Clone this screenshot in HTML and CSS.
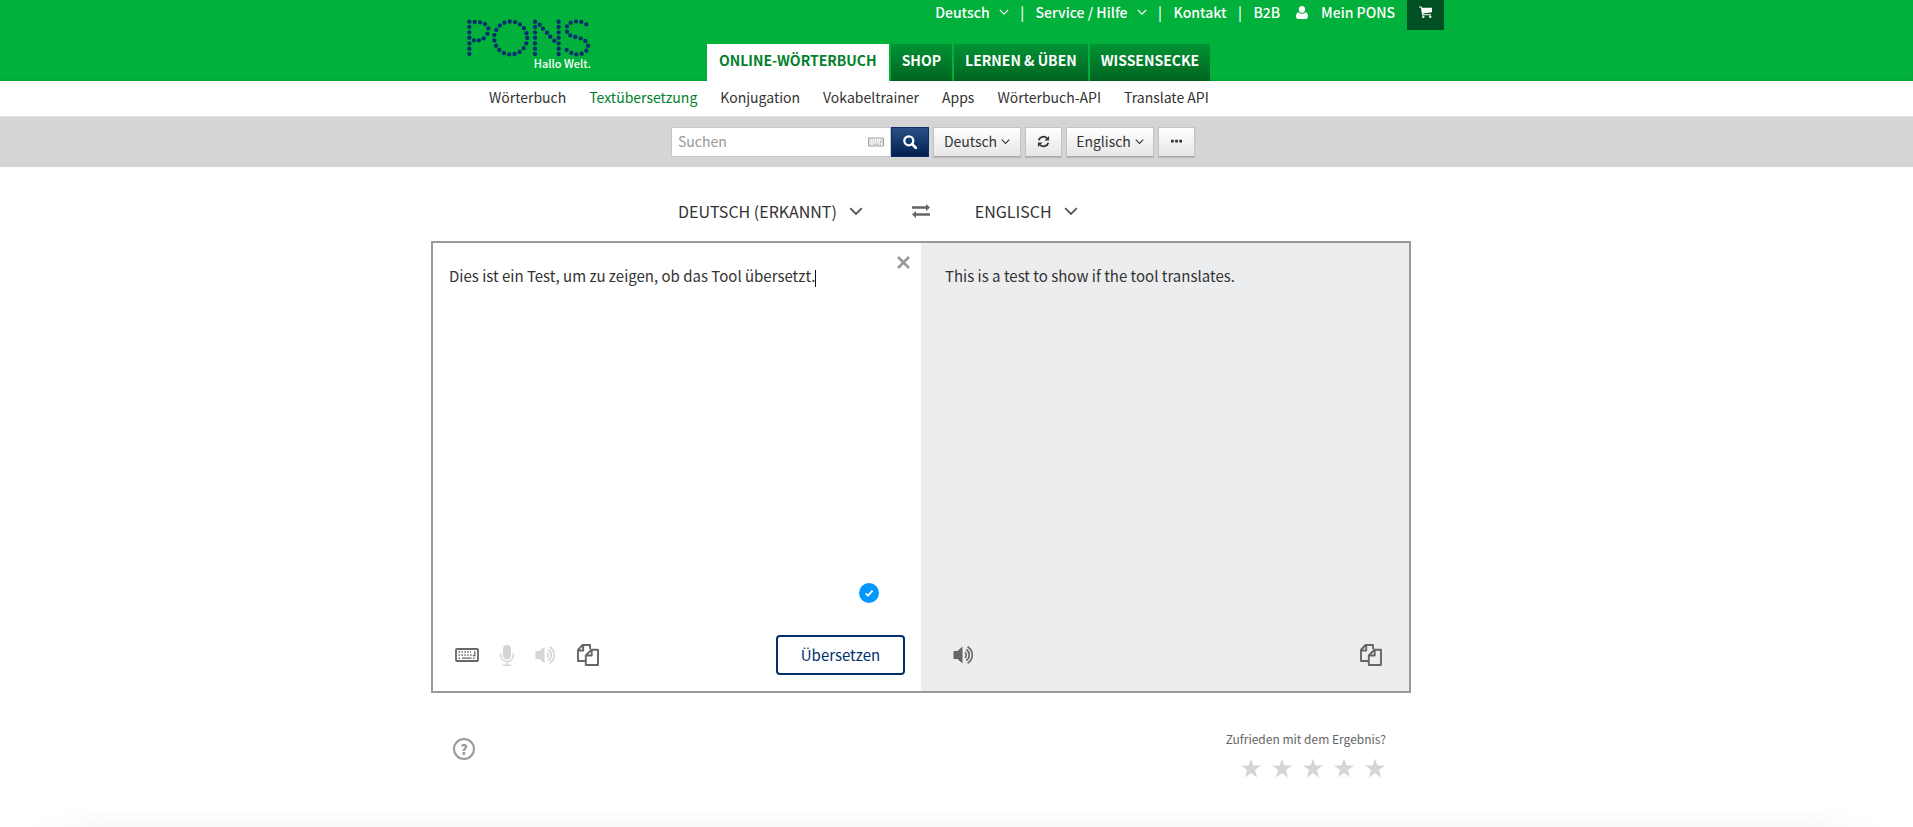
FILE: index.html
```html
<!DOCTYPE html>
<html lang="de">
<head>
<meta charset="utf-8">
<title>PONS Textübersetzung</title>
<link rel="stylesheet" href="styles.css">
</head>
<body>
<svg class="sprite" aria-hidden="true">
  <symbol id="chevron" viewBox="0 0 12 12"><path d="M1 3.500 6 8.500 11 3.500" fill="none" stroke="currentColor" stroke-width="1.500"/></symbol>
  <symbol id="keyboard" viewBox="0 0 24 14"><rect x="1" y="1" width="22" height="12" rx="1" fill="none" stroke="currentColor" stroke-width="1.800"/><path d="M3.500 4h12.500M3.500 7h13.500M3.500 10.200h2M18 10.200h2.500" stroke="currentColor" stroke-width="1.400" stroke-dasharray="1.500 1.400"/><path d="M7 10.200h9.500M19.800 3.300v4.400h-2" fill="none" stroke="currentColor" stroke-width="1.300"/></symbol>
  <symbol id="copy" viewBox="0 0 22 22"><path d="M13 5V1H5.500L1 5.800V17h7.500M1.200 6.500h5V1.200M8.800 11.500V21H21V5.800h-6.800L8.800 11.500h5.900V6" fill="none" stroke="currentColor" stroke-width="1.900" stroke-linejoin="round"/></symbol>
  <symbol id="speaker" viewBox="0 0 21 20"><path d="M.5 6H4.500l5-4.500v17L4.500 14H.5z" fill="currentColor"/><path d="M11.800 7.300a3.200 3.200 0 0 1 0 5.400M13.200 4.500a6.500 6.500 0 0 1 0 11M14.600 1.800a9.600 9.600 0 0 1 0 16.400" fill="none" stroke="currentColor" stroke-width="1.600"/></symbol>
  <symbol id="star" viewBox="0 0 20 20"><path d="m10 .4 2.400 7.100 7.600.1-6.100 4.500 2.200 7.300L10 15l-6.100 4.400 2.200-7.300L0 7.600l7.600-.1z" fill="currentColor"/></symbol>
</svg>

<header class="header">
  <div class="wrap header-inner">
    <a class="logo" href="#" aria-label="PONS">
      <svg class="logo-dots" viewBox="0 0 372 114" aria-hidden="true"><path d="M7 8h0M7 24h0M7 40h0M7 56h0M7 73h0M7 89h0M7 105h0M23 9h0M39 10h0M54 15h0M64 28h0M61 44h0M50 58h0M36 64h0M21 64h0M204 8h0M204 24h0M204 40h0M204 56h0M204 73h0M204 89h0M204 105h0M275 8h0M275 24h0M275 40h0M275 56h0M275 73h0M275 89h0M275 105h0M218 17h0M228 29h0M240 41h0M250 53h0M262 65h0M358 16h0M343 9h0M327 7h0M311 11h0M300 22h0M300 38h0M310 49h0M325 54h0M341 58h0M355 66h0M363 80h0M358 95h0M344 104h0M328 106h0M313 102h0M299 93h0"/><circle cx="131" cy="57" r="49.500" pathLength="190" stroke-dasharray="0 10"/></svg>
      <span class="claim">Hallo Welt.</span>
    </a>
    <div class="header-right">
      <nav class="meta">
        <a href="#">Deutsch <svg class="ico-chev"><use href="#chevron"/></svg></a><span class="sep">|</span>
        <a href="#">Service / Hilfe <svg class="ico-chev"><use href="#chevron"/></svg></a><span class="sep">|</span>
        <a href="#">Kontakt</a><span class="sep">|</span>
        <a href="#">B2B</a>
        <a class="account" href="#"><svg class="ico-user" viewBox="0 0 12 13"><path d="M6 0c2 0 3.200 1.500 3.200 3.300C9.200 5.300 7.900 7 6 7S2.800 5.300 2.800 3.300C2.800 1.500 4 0 6 0zM2.700 6.200C3.500 7.200 4.700 7.900 6 7.900s2.500-.7 3.300-1.700C11.300 6.500 12 8.500 12 10.500c0 1.500-.9 2.500-2.200 2.500H2.200C.9 13 0 12 0 10.500c0-2 .7-4 2.700-4.300z" fill="currentColor"/></svg>Mein PONS</a>
        <a class="cart" href="#" aria-label="Warenkorb"><svg class="ico-cart" viewBox="0 0 13 12"><path d="M0 .5h2.600l.4 1.300h10v4.500L4.100 7.400l.2.900H12v1H3.200L1.800 1.500H0z" fill="currentColor"/><circle cx="4.300" cy="10.700" r="1.200" fill="currentColor"/><circle cx="11.200" cy="10.700" r="1.200" fill="currentColor"/></svg></a>
      </nav>
      <nav class="tabs">
        <a class="tab active" href="#">ONLINE-WÖRTERBUCH</a>
        <a class="tab" href="#">SHOP</a>
        <a class="tab" href="#">LERNEN &amp; ÜBEN</a>
        <a class="tab" href="#">WISSENSECKE</a>
      </nav>
    </div>
  </div>
</header>

<nav class="subnav">
  <div class="wrap subnav-inner">
    <a href="#">Wörterbuch</a>
    <a class="current" href="#">Textübersetzung</a>
    <a href="#">Konjugation</a>
    <a href="#">Vokabeltrainer</a>
    <a href="#">Apps</a>
    <a href="#">Wörterbuch-API</a>
    <a href="#">Translate API</a>
  </div>
</nav>

<div class="searchbar">
  <form class="wrap search-inner">
    <div class="field">
      <input type="text" placeholder="Suchen" aria-label="Suchen">
      <svg class="ico-kb-small"><use href="#keyboard"/></svg>
    </div>
    <button class="go" type="button" aria-label="Suche starten"><svg class="ico-search" viewBox="0 0 14 14"><circle cx="5.800" cy="5.800" r="4.500" fill="none" stroke="currentColor" stroke-width="2.200"/><path d="m9 9 4 4" stroke="currentColor" stroke-width="2.600" stroke-linecap="round"/></svg></button>
    <button class="btn wide" type="button">Deutsch <svg class="ico-chev small"><use href="#chevron"/></svg></button>
    <button class="btn" type="button" aria-label="Sprachen tauschen"><svg class="ico-refresh" viewBox="0 0 14 14"><path d="M1.800 5.600A5.300 5.300 0 0 1 10.700 3.400M12.200 8.400A5.300 5.300 0 0 1 3.300 10.600" fill="none" stroke="currentColor" stroke-width="2"/><path d="M13 1v5H8zM1 13V8h5z" fill="currentColor"/></svg></button>
    <button class="btn wide" type="button">Englisch <svg class="ico-chev small"><use href="#chevron"/></svg></button>
    <button class="btn" type="button" aria-label="Mehr"><svg class="ico-more" viewBox="0 0 12 4"><path d="M0 .5h3v3H0zM4.500.5h3v3h-3zM9 .5h3v3H9z" fill="currentColor"/></svg></button>
  </form>
</div>

<main class="wrap">
  <div class="translator">
    <div class="languages">
      <button class="lang" type="button">DEUTSCH (ERKANNT) <svg class="ico-chev"><use href="#chevron"/></svg></button>
      <button class="lang swap" type="button" aria-label="Tauschen"><svg class="ico-swap" viewBox="0 0 18 14"><path d="M0 3.500h15M3 10.500h15" stroke="currentColor" stroke-width="2.600"/><path d="M14 0v7l4-3.500zM4 7v7L0 10.500z" fill="currentColor"/></svg></button>
      <button class="lang" type="button">ENGLISCH <svg class="ico-chev"><use href="#chevron"/></svg></button>
    </div>
    <div class="panes">
      <section class="pane">
        <button class="icon clear" type="button" aria-label="Löschen"><svg class="ico-x" viewBox="0 0 13 13"><path d="m1 1 11 11M12 1 1 12" stroke="currentColor" stroke-width="2.600"/></svg></button>
        <div class="source">
          <textarea rows="1" spellcheck="false" aria-label="Ausgangstext">Dies ist ein Test, um zu zeigen, ob das Tool übersetzt.</textarea><span class="caret"></span>
        </div>
        <div class="status"><svg class="ico-check" viewBox="0 0 20 20"><circle cx="10" cy="10" r="10" fill="#0097ff"/><path d="m6.700 10.300 2.400 2.400 4.400-5" fill="none" stroke="#fff" stroke-width="1.900"/></svg></div>
        <div class="tools">
          <button class="icon" type="button" aria-label="Tastatur"><svg class="ico-kb"><use href="#keyboard"/></svg></button>
          <button class="icon off" type="button" aria-label="Mikrofon"><svg class="ico-mic" viewBox="0 0 14 21"><rect x="3" y="0" width="8" height="14.500" rx="4" fill="currentColor"/><path d="M.7 8v2.500a6.300 6 0 0 0 12.600 0V8M7 16.500V20M2.500 20.200h9" fill="none" stroke="currentColor" stroke-width="1.400"/></svg></button>
          <button class="icon off" type="button" aria-label="Anhören"><svg class="ico-speaker"><use href="#speaker"/></svg></button>
          <button class="icon" type="button" aria-label="Kopieren"><svg class="ico-copy"><use href="#copy"/></svg></button>
          <button class="submit" type="button">Übersetzen</button>
        </div>
      </section>
      <section class="pane result">
        <p class="output">This is a test to show if the tool translates.</p>
        <div class="tools">
          <button class="icon" type="button" aria-label="Übersetzung anhören"><svg class="ico-speaker"><use href="#speaker"/></svg></button>
          <button class="icon last" type="button" aria-label="Übersetzung kopieren"><svg class="ico-copy"><use href="#copy"/></svg></button>
        </div>
      </section>
    </div>
    <div class="feedback">
      <button class="help" type="button" aria-label="Hilfe">?</button>
      <fieldset class="rating">
        <legend>Zufrieden mit dem Ergebnis?</legend>
        <div class="stars">
          <label><input type="radio" name="stars" aria-label="1 Stern"><svg class="ico-star"><use href="#star"/></svg></label>
          <label><input type="radio" name="stars" aria-label="2 Sterne"><svg class="ico-star"><use href="#star"/></svg></label>
          <label><input type="radio" name="stars" aria-label="3 Sterne"><svg class="ico-star"><use href="#star"/></svg></label>
          <label><input type="radio" name="stars" aria-label="4 Sterne"><svg class="ico-star"><use href="#star"/></svg></label>
          <label><input type="radio" name="stars" aria-label="5 Sterne"><svg class="ico-star"><use href="#star"/></svg></label>
        </div>
      </fieldset>
    </div>
  </div>
</main>
<div class="page-shade"></div>
</body>
</html>
```

FILE: styles.css
```css
* { box-sizing: border-box; }
body {
  margin: 0;
  min-height: 100vh;
  display: flex;
  flex-direction: column;
  background: #fff;
  color: #333;
  font: 15px/20px "Noto Sans CJK SC", "Noto Sans", sans-serif;
}
a { color: inherit; text-decoration: none; }
button, input, textarea { font: inherit; color: inherit; }
button { border: 0; padding: 0; background: none; cursor: pointer; }
svg { display: block; flex: none; }
.sprite { position: absolute; width: 0; height: 0; }
.wrap { width: 100%; max-width: 1051px; margin: 0 auto; }

.header { background: #02b03c; box-shadow: inset 0 -2px 2px -1px #029c35; }
.header-inner { display: flex; align-items: stretch; height: 81px; }
.logo { width: 124px; margin: 19px 0 0 36px; color: #fff; }
.logo-dots { width: 124px; height: 38px; }
.logo-dots path, .logo-dots circle { fill: none; stroke: #012f6d; stroke-width: 13; stroke-linecap: round; }
.claim { display: block; text-align: right; font-size: 11px; line-height: 12px; font-weight: 500; }
.header-right { flex: 1; display: flex; flex-direction: column; justify-content: space-between; margin: 0 38px 0 116px; }
.meta { display: flex; justify-content: flex-end; color: #fff; line-height: 24px; font-size: 14px; font-weight: 500; }
.meta a { display: flex; align-items: center; height: 24px; gap: 9px; }
.sep { width: 27px; text-align: center; }
.meta .account { margin: 0 12px 0 16px; gap: 13px; }
.meta .cart { width: 37px; height: 30px; padding-bottom: 6px; justify-content: center; background: #005023; }
.ico-chev { width: 10px; height: 10px; }
.ico-user { width: 12px; height: 13px; }
.ico-cart { width: 13px; height: 12px; }
.tabs { display: flex; gap: 2px; font-weight: 700; font-size: 14px; }
.tab { height: 37px; padding: 0 11px; line-height: 32px; color: #fff; background: linear-gradient(#029335, #006420); }
.tab.active { padding: 0 12px; background: #fff; color: #007f2c; }

.subnav { border-bottom: 1px solid #e6e6e6; }
.subnav-inner { display: flex; gap: 23px; height: 35px; padding-left: 58px; line-height: 32px; font-size: 14px; }
.current { color: #007f2c; }

.searchbar { background: #d5d5d5; }
.search-inner { display: flex; gap: 4px; padding: 10px 0 10px 240px; }
.field { display: flex; align-items: center; width: 220px; height: 30px; padding: 0 6px; margin-right: -4px; background: #fff; border: 1px solid #c8c8c8; }
.field input { flex: 1; min-width: 0; height: 28px; padding: 0 0 3px; border: 0; outline: 0; background: none; font-size: 14px; }
.field input::placeholder { color: #999; opacity: 1; }
.ico-kb-small { width: 16px; height: 10px; color: #999; }
.go { display: grid; place-items: center; width: 38px; height: 30px; color: #fff; background: linear-gradient(#2a5187, #01204f); border: 1px solid #0d2e63; }
.ico-search { width: 14px; height: 14px; }
.btn { display: flex; align-items: center; justify-content: center; gap: 4px; width: 37px; height: 30px; padding-bottom: 2px; font-size: 14px; background: linear-gradient(#fff, #e6e6e6); border: 1px solid #c4c4c4; border-bottom-color: #aaa; box-shadow: 0 1px 1px #bbb; }
.btn.wide { width: 88px; }
.ico-chev.small { width: 9px; height: 9px; }
.ico-refresh { width: 13px; height: 13px; }
.ico-more { width: 11px; height: 4px; }

.translator { max-width: 980px; }
.languages { display: flex; align-items: center; height: 74px; padding: 14px 0 0 247px; font-size: 16px; }
.lang { display: flex; align-items: center; gap: 12px; }
.lang .ico-chev { width: 14px; height: 14px; color: #555; }
.swap { color: #666; margin: 0 45px 0 49px; }
.ico-swap { width: 18px; height: 14px; }
.panes { display: grid; grid-template-columns: 1fr 1fr; border: 2px solid #999; }
.pane { position: relative; display: flex; flex-direction: column; height: 448px; padding: 22px 16px 16px; line-height: 22px; }
.result { background: #ecedef; padding-left: 24px; }
.clear { position: absolute; top: 13px; right: 11px; color: #999; }
.ico-x { width: 13px; height: 13px; }
.source { display: flex; flex: 1; align-items: flex-start; }
.source textarea { field-sizing: content; max-width: 420px; padding: 0; border: 0; outline: 0; resize: none; overflow: hidden; background: none; line-height: 22px; }
.caret { width: 1px; height: 17px; margin-top: 5px; background: #111; }
.output { flex: 1; margin: 0; }
.status { display: flex; justify-content: flex-end; padding: 0 26px 32px 0; }
.ico-check { width: 20px; height: 20px; }
.tools { display: flex; align-items: center; height: 40px; gap: 21px; padding-left: 6px; color: #666; }
.icon { display: block; }
.off { color: #d5d5d5; }
.ico-kb { width: 24px; height: 14px; }
.ico-mic { width: 14px; height: 21px; }
.ico-speaker { width: 21px; height: 20px; }
.ico-copy { width: 22px; height: 22px; }
.submit { width: 129px; height: 40px; margin-left: auto; border: 2px solid #012f6d; border-radius: 4px; color: #012f6d; background: #fff; }
.result .tools { padding: 0 11px 0 8px; }
.last { margin-left: auto; }

.feedback { display: flex; justify-content: space-between; align-items: flex-start; padding: 35px 25px 0 22px; }
.help { width: 22px; height: 22px; margin-top: 10px; border: 2px solid #999; border-radius: 50%; color: #999; font-size: 14px; line-height: 16px; font-weight: 900; }
.rating { border: 0; margin: 0; padding: 0; color: #666; }
.rating legend { padding: 0; font-size: 12px; line-height: 22px; }
.stars { display: flex; justify-content: flex-end; gap: 11px; padding: 8px 1px 0 0; color: #d5d5d5; }
.stars label { display: block; }
.stars input { position: absolute; opacity: 0; margin: 0; }
.ico-star { width: 20px; height: 20px; }
.page-shade { height: 18px; margin: auto 30px 0; background: linear-gradient(to right, #fff, transparent 80px, transparent calc(100% - 80px), #fff), linear-gradient(#fff, #f8f8f8); }
```
